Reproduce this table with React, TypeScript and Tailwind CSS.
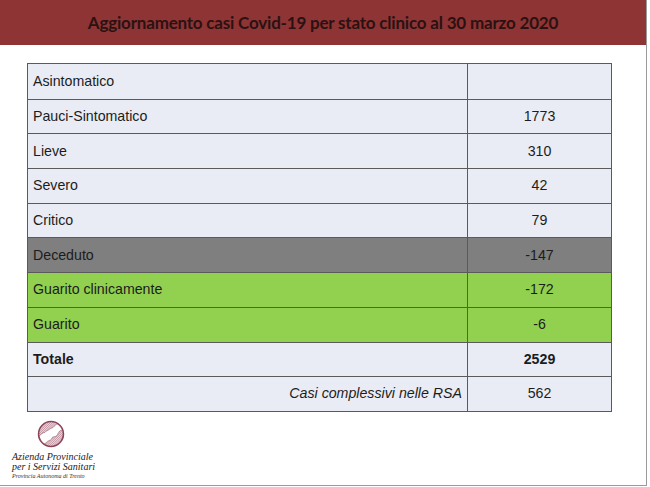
import React from 'react';

type Row = { label: string; value: string; bg: string; bold?: boolean; italic?: boolean };

const rows: Row[] = [
  { label: 'Asintomatico', value: '', bg: 'bg-[#e9ecf4]' },
  { label: 'Pauci-Sintomatico', value: '1773', bg: 'bg-[#e9ecf4]' },
  { label: 'Lieve', value: '310', bg: 'bg-[#e9ecf4]' },
  { label: 'Severo', value: '42', bg: 'bg-[#e9ecf4]' },
  { label: 'Critico', value: '79', bg: 'bg-[#e9ecf4]' },
  { label: 'Deceduto', value: '-147', bg: 'bg-[#7f7f7f]' },
  { label: 'Guarito clinicamente', value: '-172', bg: 'bg-[#92d050]' },
  { label: 'Guarito', value: '-6', bg: 'bg-[#92d050]' },
  { label: 'Totale', value: '2529', bg: 'bg-[#e9ecf4]', bold: true },
  { label: 'Casi complessivi nelle RSA', value: '562', bg: 'bg-[#e9ecf4]', italic: true },
];

const Logo = () => (
  <svg width="28" height="28" viewBox="0 0 36 36">
    <defs>
      <pattern id="hatch" width="2" height="2" patternUnits="userSpaceOnUse" patternTransform="rotate(45)">
        <rect width="2" height="2" fill="#ecd8de" />
        <line x1="0" y1="0" x2="0" y2="2" stroke="#9b5a6c" strokeWidth="1" />
      </pattern>
      <clipPath id="globe">
        <circle cx="18" cy="18" r="15" />
      </clipPath>
    </defs>
    <circle cx="18" cy="18" r="16" fill="url(#hatch)" />
    <path
      clipPath="url(#globe)"
      d="M2 21 C5 19 7 16 10 16 C12 13 14 14 16 12 C18 10 20 11 22 8 C24 6 26 5 28 4 L34 12 C31 14 29 13 28 16 C26 18 27 20 24 21 C22 22 20 21 19 24 C17 27 14 26 12 29 C10 31 8 31 6 32 L2 28 Z"
      fill="#ffffff"
      stroke="#8b4457"
      strokeWidth="0.7"
    />
    <circle cx="18" cy="18" r="16" fill="none" stroke="#8b4457" strokeWidth="2" />
  </svg>
);

export default function App() {
  return (
    <div className="w-[650px] h-[487px] bg-white overflow-hidden">
      <div className="w-[647px] h-[486px] border-r border-b border-[#9a9a9a] flex flex-col">
        <div className="h-[45px] bg-[#8f3434] flex items-center justify-center">
          <h1
            className="text-[#2a1212] text-[17px] font-bold tracking-[-0.2px] pt-[1px]"
            style={{ fontFamily: 'Lato, "Open Sans", sans-serif' }}
          >
            Aggiornamento casi Covid-19 per stato clinico al 30 marzo 2020
          </h1>
        </div>
        <div className="pl-[27px] pt-[18px]">
          <div
            className="w-[585px] border border-[#5a5a5a] text-[14.2px] text-[#1c1c1c]"
            style={{ fontFamily: '"Liberation Sans", Arial, sans-serif' }}
          >
            {rows.map((r, i) => (
              <div
                key={r.label}
                className={`flex h-[34.7px] ${r.bg} ${i > 0 ? 'border-t border-[#5a5a5a]' : ''}`}
              >
                <div
                  className={`flex-1 flex items-center px-[5px] border-r border-[#5a5a5a] ${
                    r.italic ? 'justify-end italic' : ''
                  } ${r.bold ? 'font-bold' : ''}`}
                >
                  {r.label}
                </div>
                <div className={`w-[143px] flex items-center justify-center ${r.bold ? 'font-bold' : ''}`}>
                  {r.value}
                </div>
              </div>
            ))}
          </div>
        </div>
        <div className="pl-[12px] pt-[8px] flex flex-col items-start" style={{ fontFamily: '"Liberation Serif", serif' }}>
          <div className="ml-[25px]">
            <Logo />
          </div>
          <div className="italic text-[10px] leading-[10px] text-[#222] mt-[4px]">Azienda Provinciale</div>
          <div className="italic text-[10px] leading-[10px] text-[#222]">per i Servizi Sanitari</div>
          <div className="italic text-[6px] leading-[8px] text-[#333]">Provincia Autonoma di Trento</div>
        </div>
      </div>
    </div>
  );
}
